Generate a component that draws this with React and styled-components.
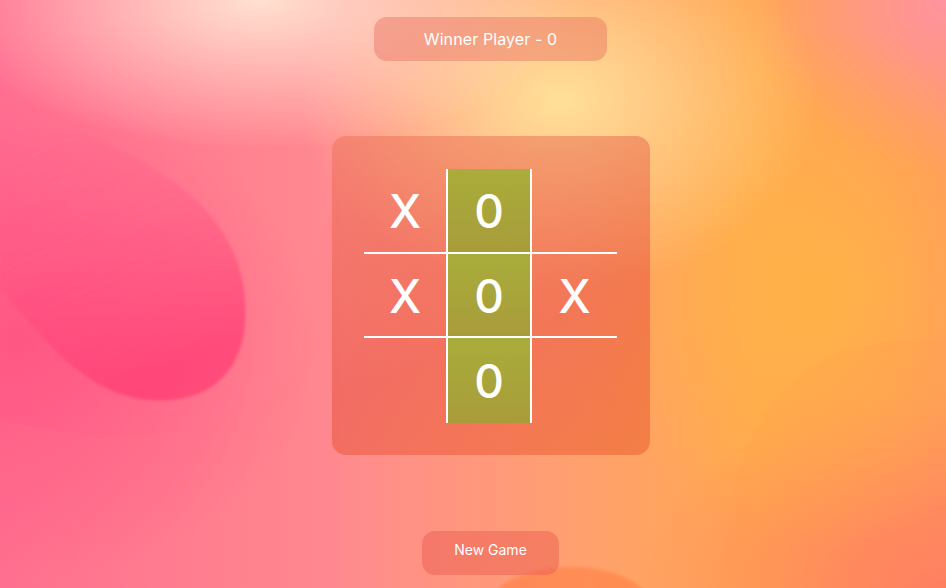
import React from "react";
import styled, { createGlobalStyle } from "styled-components";

const Global = createGlobalStyle`
  html, body { margin: 0; padding: 0; height: 100%; }
  body { font-family: "Inter", "Open Sans", sans-serif; overflow: hidden; }
  #root { height: 100%; }
`;

const Page = styled.div`
  position: relative;
  width: 100vw;
  height: 100vh;
  overflow: hidden;
  background:
    radial-gradient(ellipse 320px 150px at 260px 0px, rgba(255,230,212,0.95), rgba(255,230,212,0) 100%),
    radial-gradient(ellipse 260px 190px at 560px 100px, rgba(255,228,155,0.95), rgba(255,228,155,0) 100%),
    radial-gradient(ellipse 230px 260px at 820px 290px, rgba(255,180,70,0.9), rgba(255,180,70,0) 100%),
    radial-gradient(ellipse 200px 170px at 946px 0px, rgba(255,145,170,0.85), rgba(255,145,170,0) 100%),
    radial-gradient(ellipse 300px 240px at 20px 340px, rgba(255,82,130,0.85), rgba(255,82,130,0) 100%),
    radial-gradient(ellipse 300px 200px at 940px 590px, rgba(255,120,100,0.9), rgba(255,120,100,0) 100%),
    linear-gradient(90deg, #ff6e90 0%, #ff8a90 35%, #ffa070 60%, #ffa850 80%, #ff9a60 100%);
`;

const Art = styled.svg`
  position: absolute;
  inset: 0;
  width: 100%;
  height: 100%;
  pointer-events: none;
`;

const Content = styled.main`
  position: relative;
  display: flex;
  flex-direction: column;
  align-items: center;
  padding-top: 17px;
  padding-left: 35px;
`;

const Glass = styled.div`
  border-radius: 13px;
  color: #fff;
  box-sizing: border-box;
  display: flex;
  align-items: center;
  justify-content: center;
`;

const Winner = styled(Glass)`
  width: 233px;
  height: 44px;
  background: rgba(232, 108, 92, 0.42);
  font-size: 16px;
  font-weight: 400;
  letter-spacing: 0.1px;
`;

const Board = styled(Glass)`
  margin-top: 75px;
  width: 318px;
  height: 319px;
  border-radius: 14px;
  background: linear-gradient(160deg, rgba(232, 110, 80, 0.45) 0%, rgba(230, 78, 60, 0.5) 60%, rgba(232, 90, 40, 0.5) 100%);
`;

const Grid = styled.div`
  display: grid;
  grid-template-columns: 82px 86px 85px;
  grid-template-rows: 83px 86px 85px;
  width: 253px;
  height: 254px;
`;

const Cell = styled.div`
  box-sizing: border-box;
  display: flex;
  align-items: center;
  justify-content: center;
  font-size: 46px;
  font-weight: 500;
  color: #fff;
  background: ${(p) => (p.$win ? "linear-gradient(180deg, #a9ad3a 0%, #a89c3a 100%)" : "transparent")};
  border-left: ${(p) => (p.$col === 1 ? "2px solid #fff" : "none")};
  border-right: ${(p) => (p.$col === 1 ? "2px solid #fff" : "none")};
  border-top: ${(p) => (p.$row === 1 ? "2px solid #fff" : "none")};
  border-bottom: ${(p) => (p.$row === 1 ? "2px solid #fff" : "none")};
  padding-top: 2px;
`;

const NewGame = styled.button`
  margin-top: 76px;
  width: 137px;
  height: 44px;
  padding: 0 0 8px;
  border: none;
  border-radius: 13px;
  background: rgba(232, 88, 78, 0.45);
  color: #fff;
  font-family: inherit;
  font-size: 14px;
  font-weight: 400;
  cursor: pointer;
`;

const cells = ["X", "0", "", "X", "0", "X", "", "0", ""];
const winning = [1, 4, 7];

export default function App() {
  return (
    <>
      <Global />
      <Page>
        <Art viewBox="0 0 946 588" preserveAspectRatio="none">
          <defs>
            <filter id="soft" x="-20%" y="-20%" width="140%" height="140%">
              <feGaussianBlur stdDeviation="1.5" />
            </filter>
            <linearGradient id="blob" x1="0" y1="0" x2="0.4" y2="1">
              <stop offset="0" stopColor="#ff4f86" stopOpacity="0" />
              <stop offset="0.45" stopColor="#ff4a80" stopOpacity="0.25" />
              <stop offset="1" stopColor="#ff3570" stopOpacity="0.65" />
            </linearGradient>
          </defs>
          <path
            d="M0 290 C 40 330, 80 395, 150 400 C 220 405, 250 360, 245 300 C 240 230, 190 180, 100 140 C 50 120, 0 130, 0 150 Z"
            fill="url(#blob)"
            filter="url(#soft)"
          />
          <path
            d="M0 420 C 120 450, 260 440, 300 360 C 310 300, 310 240, 340 200 L 340 588 L 0 588 Z"
            fill="#ff7e8a"
            opacity="0.12"
          />
          <path
            d="M725 588 C 720 470, 760 380, 850 350 C 900 335, 946 340, 946 340 L 946 588 Z"
            fill="#ff9a50"
            opacity="0.15"
          />
          <ellipse cx="570" cy="605" rx="80" ry="38" fill="#ff7a3c" opacity="0.5" filter="url(#soft)" />
        </Art>
        <Content>
          <Winner>Winner Player - 0</Winner>
          <Board>
            <Grid>
              {cells.map((v, i) => (
                <Cell key={i} $row={Math.floor(i / 3)} $col={i % 3} $win={winning.includes(i)}>
                  {v}
                </Cell>
              ))}
            </Grid>
          </Board>
          <NewGame>New Game</NewGame>
        </Content>
      </Page>
    </>
  );
}
